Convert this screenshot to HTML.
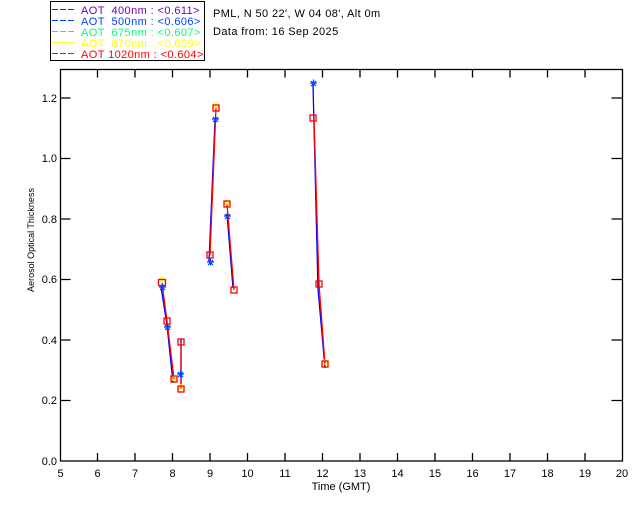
<!DOCTYPE html>
<html><head><meta charset="utf-8"><style>
html,body{margin:0;padding:0;background:#fff;width:640px;height:512px;overflow:hidden}
svg{display:block}
text{font-family:"Liberation Sans",sans-serif;font-size:11px}
.lg{letter-spacing:0.4px}
</style></head><body>
<svg width="640" height="512" viewBox="0 0 640 512" xmlns="http://www.w3.org/2000/svg">
<rect width="640" height="512" fill="#fff"/>
<rect x="50.5" y="1.5" width="154" height="59" fill="none" stroke="#000" stroke-width="1"/>
<g stroke-width="1">
<line x1="52" y1="9.5" x2="74" y2="9.5" stroke="#7000c0" stroke-dasharray="6,2"/>
<line x1="52" y1="20.5" x2="74" y2="20.5" stroke="#0040ff" stroke-dasharray="6,2"/>
<line x1="52" y1="31.5" x2="74" y2="31.5" stroke="#00ff80" stroke-dasharray="6,2"/>
<line x1="52" y1="42.5" x2="74" y2="42.5" stroke="#ffff00" stroke-dasharray="6,2"/>
<line x1="52" y1="53.5" x2="74" y2="53.5" stroke="#ff0000" stroke-dasharray="6,2"/>
</g>
<text class="lg" x="81" y="14" fill="#7000c0" xml:space="preserve">AOT  400nm : &lt;0.611&gt;</text>
<text class="lg" x="81" y="25" fill="#0040ff" xml:space="preserve">AOT  500nm : &lt;0.606&gt;</text>
<text class="lg" x="81" y="36" fill="#00ff80" xml:space="preserve">AOT  675nm : &lt;0.607&gt;</text>
<text class="lg" x="81" y="47" fill="#ffff00" xml:space="preserve">AOT  870nm : &lt;0.609&gt;</text>
<text class="lg" x="81" y="58" fill="#ff0000" xml:space="preserve">AOT 1020nm : &lt;0.604&gt;</text>
<text class="lg" x="213" y="17" fill="#000">PML, N 50 22', W 04 08', Alt 0m</text>
<text class="lg" x="213" y="35" fill="#000">Data from: 16 Sep 2025</text>
<rect x="60.5" y="69.5" width="562" height="391.5" fill="none" stroke="#000" stroke-width="1.3"/>
<g stroke="#000" stroke-width="1.3">
<path d="M97.5 461v-8M135 461v-8M172.5 461v-8M210 461v-8M247.5 461v-8M285 461v-8M322.5 461v-8M360 461v-8M397.5 461v-8M435 461v-8M472.5 461v-8M510 461v-8M547.5 461v-8M585 461v-8"/>
<path d="M97.5 69.5v8M135 69.5v8M172.5 69.5v8M210 69.5v8M247.5 69.5v8M285 69.5v8M322.5 69.5v8M360 69.5v8M397.5 69.5v8M435 69.5v8M472.5 69.5v8M510 69.5v8M547.5 69.5v8M585 69.5v8"/>
<path d="M60.5 400.5h10M60.5 340h10M60.5 279.5h10M60.5 219h10M60.5 158.5h10M60.5 98h10"/>
<path d="M622.5 400.5h-11M622.5 340h-11M622.5 279.5h-11M622.5 219h-11M622.5 158.5h-11M622.5 98h-11"/>
</g>
<g fill="#000" text-anchor="end">
<text x="57" y="465">0.0</text><text x="57" y="404">0.2</text><text x="57" y="344">0.4</text>
<text x="57" y="283">0.6</text><text x="57" y="223">0.8</text><text x="57" y="162">1.0</text><text x="57" y="102">1.2</text>
</g>
<g fill="#000" text-anchor="middle">
<text x="60.5" y="477">5</text><text x="97.5" y="477">6</text><text x="135" y="477">7</text><text x="172.5" y="477">8</text>
<text x="210" y="477">9</text><text x="247.5" y="477">10</text><text x="285" y="477">11</text><text x="322.5" y="477">12</text>
<text x="360" y="477">13</text><text x="397.5" y="477">14</text><text x="435" y="477">15</text><text x="472.5" y="477">16</text>
<text x="510" y="477">17</text><text x="547.5" y="477">18</text><text x="585" y="477">19</text><text x="622" y="477">20</text>
<text x="341" y="490">Time (GMT)</text>
<text transform="translate(34,240) rotate(-90)" style="font-size:9px">Aerosol Optical Thickness</text>
</g>
<g fill="none" stroke-width="1.3">
<path d="M161 287L167 325L173 383M181 339L181 384M209 262L215 120M227 214L233 288M313 84L318 289L325 368" stroke="#0000ff"/>
<path d="M162 283L167 321L174 379M181 342L181 389M210 255L216 108M227 204L234 290M314 118L319 284L325 364" stroke="#ff0000"/>
</g>
<g fill="none" stroke="#ffff00" stroke-width="1.2">
<path d="M162 277l-3 4h6zM216 103l-3 4h6zM227 200l-3 4h6zM325 360l-3 4h6zM181 385l-3 4h6zM174 376l-3 4h6z"/>
</g>
<g fill="none" stroke="#0040ff" stroke-width="1.2">
<path d="M159 287h7M162.5 283.5v7M160 285l5 5M165 285l-5 5"/>
<path d="M164 327h7M167.5 323.5v7M165 325l5 5M170 325l-5 5"/>
<path d="M177 374h7M180.5 370.5v7M178 372l5 5M183 372l-5 5"/>
<path d="M212 119h7M215.5 115.5v7M213 117l5 5M218 117l-5 5"/>
<path d="M224 216h7M227.5 212.5v7M225 214l5 5M230 214l-5 5"/>
<path d="M310 83h7M313.5 79.5v7M311 81l5 5M316 81l-5 5"/>
<path d="M207 262h7M210.5 258.5v7M208 260l5 5M213 260l-5 5"/>
</g>
<g fill="none" stroke="#ff0000" stroke-width="1.3">
<rect x="158.5" y="279.5" width="7" height="6"/>
<rect x="164" y="318" width="6" height="6"/>
<rect x="171" y="376" width="6" height="6"/>
<rect x="178" y="339" width="6" height="6"/>
<rect x="178" y="386" width="6" height="6"/>
<rect x="207" y="252" width="6" height="6"/>
<rect x="213" y="105" width="6" height="6"/>
<rect x="224" y="201" width="6" height="6"/>
<rect x="231" y="287" width="6" height="6"/>
<rect x="310" y="115" width="6" height="6"/>
<rect x="316" y="281" width="6" height="6"/>
<rect x="322" y="361" width="6" height="6"/>
</g>
</svg>
</body></html>
